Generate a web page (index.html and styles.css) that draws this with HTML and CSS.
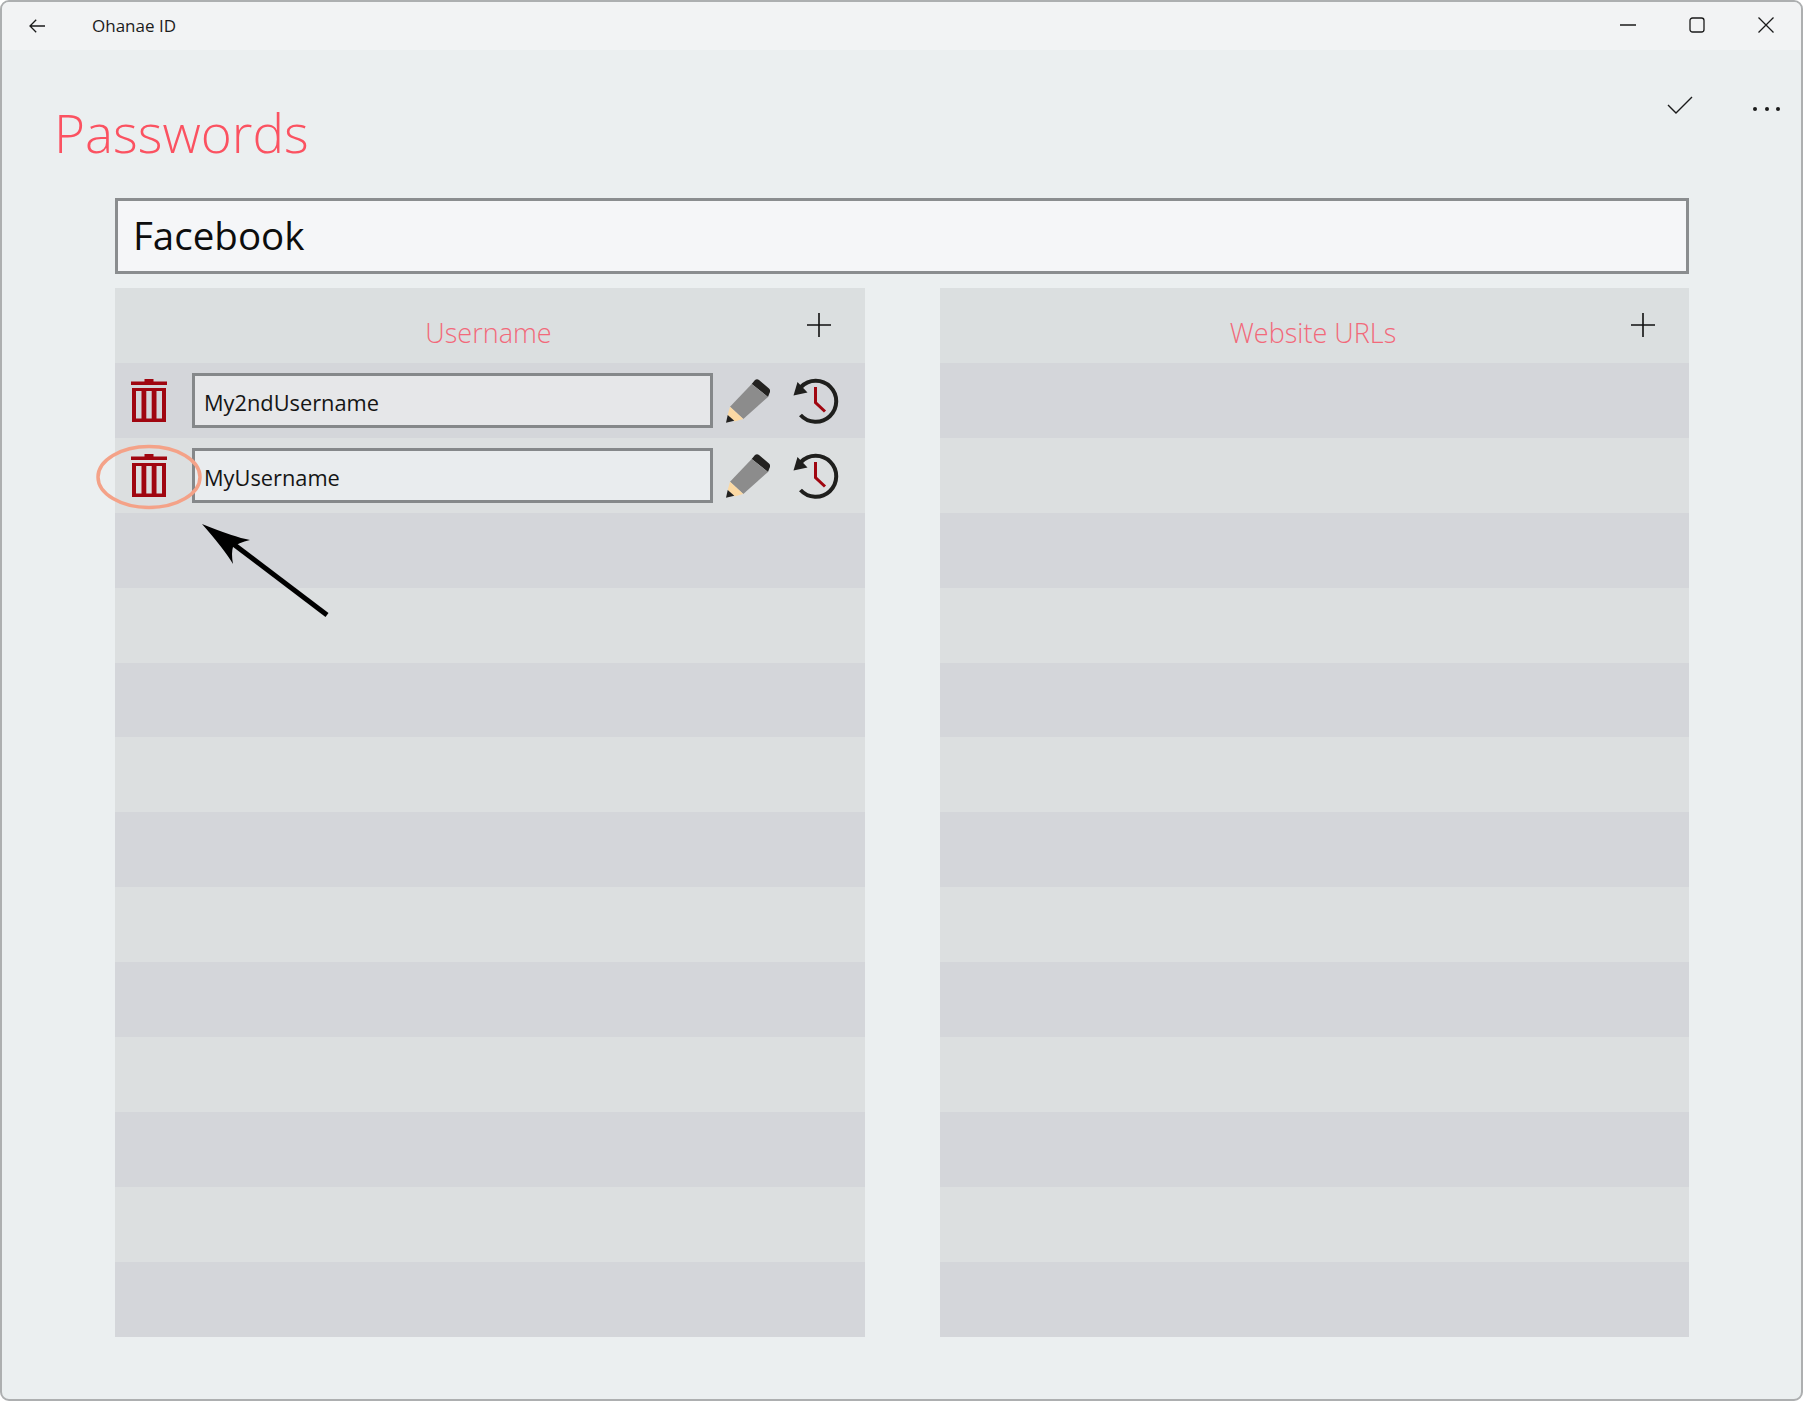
FILE: index.html
```html
<!DOCTYPE html>
<html lang="en">
<head>
<meta charset="utf-8">
<title>Ohanae ID</title>
<link rel="stylesheet" href="styles.css">
</head>
<body>
<svg class="defs" width="0" height="0" aria-hidden="true">
  <symbol id="trash" viewBox="0 0 36 44">
    <path fill="#a00610" d="M13.500 0h9v2.500h13.500v3.500H0V2.500h13.500zM1 9h34v34H1zM5 12v27.500h5.500V12zM15.300 12v27.500h5.400V12zM25.500 12v27.500H31V12z" fill-rule="evenodd"/>
  </symbol>
  <symbol id="pencil" viewBox="0 0 44 44">
    <path fill="#232220" d="M25.700 5l3.300-4q2-1.500 4 0l10 8.500q2 2 .5 4.500l-1.500 4z"/>
    <path fill="#8c8c8c" d="M25.700 5 42 18 17.300 40 4 27.700z"/>
    <path fill="#fbd9a4" d="M4 27.700 17.300 40l-9 2.500-6.600-6.500z"/>
    <path fill="#232220" d="M1.700 36l6.600 5.700L0 43.700z"/>
  </symbol>
  <symbol id="history" viewBox="0 0 46 46">
    <path fill="none" stroke="#1f1f1d" stroke-width="4" d="M8 9a20.500 20.500 0 1 1-.5 28"/>
    <path fill="#1f1f1d" d="M.5 17.500 4.500 4 14.500 14.500z"/>
    <path fill="none" stroke="#a00610" stroke-width="3" d="M22.500 9v15.500L32 33.500"/>
  </symbol>
  <symbol id="plus" viewBox="0 0 24 24">
    <path fill="none" stroke="#111" stroke-width="1.600" d="M12 0v24M0 12h24"/>
  </symbol>
</svg>

<div class="window">
  <header class="titlebar">
    <svg class="back" width="16" height="14" viewBox="0 0 16 14"><path fill="none" stroke="#1a1a1a" stroke-width="1.300" d="M16 7H1M7.200 .8 1 7l6.200 6.200"/></svg>
    <span class="app-title">Ohanae ID</span>
    <div class="window-controls">
      <svg width="16" height="16" viewBox="0 0 16 16"><path stroke="#1a1a1a" stroke-width="1.300" d="M0 8h16"/></svg>
      <svg width="16" height="16" viewBox="0 0 16 16"><rect x="1" y="1" width="14" height="14" rx="2.500" fill="none" stroke="#1a1a1a" stroke-width="1.300"/></svg>
      <svg width="16" height="16" viewBox="0 0 16 16"><path stroke="#1a1a1a" stroke-width="1.300" d="M.5.500l15 15M15.500.500l-15 15"/></svg>
    </div>
  </header>

  <main class="content">
    <div class="page-head">
      <h1 class="page-title">Passwords</h1>
      <div class="commands">
        <svg width="26" height="18" viewBox="0 0 26 18"><path fill="none" stroke="#1a1a1a" stroke-width="1.400" d="M1 9l8 8L25 1"/></svg>
        <div class="more"><i></i><i></i><i></i></div>
      </div>
    </div>

    <div class="name-box">Facebook</div>

    <div class="panels">
      <section class="panel">
        <div class="panel-head"><h2>Username</h2><svg class="plus"><use href="#plus"/></svg></div>
        <div class="rows">
          <div class="row">
            <svg class="ic-trash"><use href="#trash"/></svg>
            <div class="field">My2ndUsername</div>
            <svg class="ic-pencil"><use href="#pencil"/></svg>
            <svg class="ic-history"><use href="#history"/></svg>
          </div>
          <div class="row">
            <svg class="ic-trash"><use href="#trash"/></svg>
            <div class="field">MyUsername</div>
            <svg class="ic-pencil"><use href="#pencil"/></svg>
            <svg class="ic-history"><use href="#history"/></svg>
          </div>
          <div class="row"></div><div class="row"></div><div class="row"></div><div class="row"></div><div class="row"></div><div class="row"></div><div class="row"></div><div class="row"></div><div class="row"></div><div class="row"></div><div class="row"></div>
        </div>
      </section>
      <section class="panel">
        <div class="panel-head"><h2>Website URLs</h2><svg class="plus"><use href="#plus"/></svg></div>
        <div class="rows">
          <div class="row"></div><div class="row"></div><div class="row"></div><div class="row"></div><div class="row"></div><div class="row"></div><div class="row"></div><div class="row"></div><div class="row"></div><div class="row"></div><div class="row"></div><div class="row"></div><div class="row"></div>
        </div>
      </section>
    </div>
  </main>

  <svg class="annotation" width="260" height="190" viewBox="0 0 260 190">
    <ellipse cx="67" cy="34" rx="51" ry="30.500" fill="none" stroke="#f4a288" stroke-width="3.500"/>
    <path fill="none" stroke="#000" stroke-width="5" d="M245 172 150 100"/>
    <path fill="#000" d="M120 81q32 13 48 16q-12 3-17 7q-2 6 0 17q-9-15-31-40z"/>
  </svg>
</div>
</body>
</html>
```

FILE: styles.css
```css
* { box-sizing: border-box; }
html, body { margin: 0; padding: 0; }
body { width: 1803px; height: 1401px; background: #ffffff; font-family: "Open Sans", "Noto Sans", sans-serif; color: #111; overflow: hidden; }
.defs { position: absolute; }

.window {
  position: relative;
  width: 1803px;
  height: 1401px;
  border: 2px solid #adafb0;
  border-radius: 9px;
  background: #ebeff0;
  overflow: hidden;
}

.titlebar {
  display: flex;
  align-items: center;
  height: 48px;
  padding: 0 0 1px 27px;
  background: #f2f3f4;
}
.back { flex: none; }
.app-title { margin-left: 47px; font-size: 17px; color: #1c1c1c; }
.window-controls {
  display: flex;
  gap: 53px;
  margin-left: auto;
  padding-right: 27px;
  padding-bottom: 1px;
}

.content { padding: 0 112px 0 0; }
.page-head {
  display: flex;
  justify-content: space-between;
  height: 148px;
}
.page-title {
  margin: 47px 0 0 52px;
  font-size: 53px;
  line-height: 72px;
  font-weight: 300;
  color: #fb5261;
}
.commands {
  display: flex;
  align-items: flex-start;
  gap: 60px;
  margin-right: -91px;
  padding-top: 46px;
}
.more { display: flex; gap: 7.500px; padding-top: 11px; }
.more i { width: 4px; height: 4px; border-radius: 50%; background: #1a1a1a; }

.name-box {
  height: 76px;
  margin-left: 113px;
  padding-left: 15px;
  border: 3px solid #8a8d8f;
  background: #f5f6f8;
  font-size: 38.500px;
  line-height: 68px;
  color: #0d0d0d;
}

.panels {
  display: grid;
  grid-template-columns: 750px 749px;
  column-gap: 75px;
  margin: 14px 0 0 113px;
}
.panel-head {
  position: relative;
  display: flex;
  justify-content: center;
  height: 75px;
  padding-right: 3px;
  background: #dbdfe0;
}
.panel-head h2 {
  margin: 25px 0 0;
  font-size: 27px;
  line-height: 40px;
  font-weight: 300;
  color: #f2697a;
}
.plus { position: absolute; top: 25px; right: 34px; width: 24px; height: 24px; }

.rows { display: grid; grid-auto-rows: 74.900px; }
.row {
  display: flex;
  align-items: center;
  padding-left: 16px;
  background: #d4d6da;
}
.row:nth-child(even) { background: #dcdfe0; }

.ic-trash { flex: none; width: 36px; height: 44px; margin-top: 2px; }
.field {
  flex: none;
  width: 521px;
  height: 55px;
  margin-left: 25px;
  padding-left: 9px;
  border: 3px solid #85888a;
  background: #e6e7e9;
  font-size: 21.800px;
  line-height: 53px;
  color: #151515;
}
.row:nth-child(even) .field { background: #e9ecee; }
.ic-pencil { flex: none; width: 44px; height: 44px; margin: 2px 0 0 13px; }
.ic-history { flex: none; width: 46px; height: 46px; margin: 2px 0 0 23px; }

.annotation { position: absolute; left: 80px; top: 441px; }
```
